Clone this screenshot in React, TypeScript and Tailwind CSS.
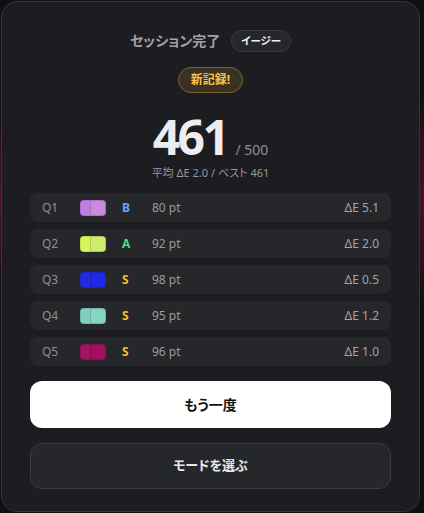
import React from "react";

type Row = { q: string; a: string; b: string; grade: string; gc: string; pt: number; de: string };

const rows: Row[] = [
  { q: "Q1", a: "#bb80e2", b: "#c98ad8", grade: "B", gc: "text-[#60a5fa]", pt: 80, de: "5.1" },
  { q: "Q2", a: "#d6f65e", b: "#cdee6a", grade: "A", gc: "text-[#4ade80]", pt: 92, de: "2.0" },
  { q: "Q3", a: "#1f2ce0", b: "#1f28e6", grade: "S", gc: "text-[#fbbf24]", pt: 98, de: "0.5" },
  { q: "Q4", a: "#7fcfbe", b: "#87d4c6", grade: "S", gc: "text-[#fbbf24]", pt: 95, de: "1.2" },
  { q: "Q5", a: "#a0145c", b: "#a30f62", grade: "S", gc: "text-[#fbbf24]", pt: 96, de: "1.0" },
];

export default function App() {
  return (
    <div
      className="w-[424px] h-[513px] bg-[#101012] overflow-hidden [font-feature-settings:'palt']"
      style={{
        fontFamily: '"Noto Sans", "Noto Sans CJK JP", sans-serif',
        backgroundImage:
          "radial-gradient(ellipse 40px 110px at 0px 200px, #4a0f30, transparent), radial-gradient(ellipse 40px 110px at 424px 200px, #4a0f30, transparent)",
      }}
    >
      <div className="ml-[1px] mt-[1px] w-[419px] h-[511px] rounded-[16px] border border-[#34353a] bg-[#1d1d21] px-[28px] pt-[28px] flex flex-col">
        <div className="flex items-center justify-center gap-[11px] h-[22px]">
          <span className="text-[14px] font-semibold text-[#a0a0a8] leading-none">セッション完了</span>
          <span className="h-[22px] px-[9px] rounded-full border border-[#3a3b41] bg-[#26272c] text-[10.5px] font-bold text-[#f2f2f4] flex items-center leading-none">
            イージー
          </span>
        </div>
        <div className="flex justify-center mt-[15px]">
          <span className="h-[26px] px-[12px] rounded-full border border-[#7a6333] bg-[#3a3123] text-[12px] font-bold text-[#f7c34a] flex items-center leading-none">
            新記録!
          </span>
        </div>
        <div className="flex items-baseline justify-center mt-[23px] h-[42px]">
          <span className="text-[48px] font-bold text-[#ececf1] leading-[42px] tracking-[-2.5px]">461</span>
          <span className="ml-[8px] text-[14px] leading-[16px] text-[#8c8c94]">/ 500</span>
        </div>
        <div className="text-center text-[11px] text-[#97979f] mt-[7px] leading-[16px]">平均 ΔE 2.0 / ベスト 461</div>
        <div className="mt-[12px] flex flex-col gap-[7px]">
          {rows.map((r) => (
            <div key={r.q} className="h-[29px] rounded-[8px] bg-[#26272b] flex items-center px-[12px] text-[12px]">
              <span className="w-[38px] text-[#8f8f97]">{r.q}</span>
              <span className="relative w-[26px] h-[16px]">
                <span className="absolute left-0 top-0 w-[16px] h-[16px] rounded-[4px] border border-black/10" style={{ backgroundColor: r.a }} />
                <span className="absolute left-[10px] top-0 w-[16px] h-[16px] rounded-[4px] border border-black/15" style={{ backgroundColor: r.b }} />
              </span>
              <span className={`ml-[16px] w-[30px] text-[12px] font-bold ${r.gc}`}>{r.grade}</span>
              <span className="text-[#9a9aa2]">{r.pt} pt</span>
              <span className="ml-auto text-[#a2a2aa]">ΔE {r.de}</span>
            </div>
          ))}
        </div>
        <button className="mt-[15px] h-[47px] rounded-[12px] bg-white text-[#111] text-[14px] font-bold">もう一度</button>
        <button className="mt-[15px] h-[46px] rounded-[12px] bg-[#26272b] border border-[#3a3b40] text-[#e8e8ec] text-[13px] font-bold">
          モードを選ぶ
        </button>
      </div>
    </div>
  );
}
